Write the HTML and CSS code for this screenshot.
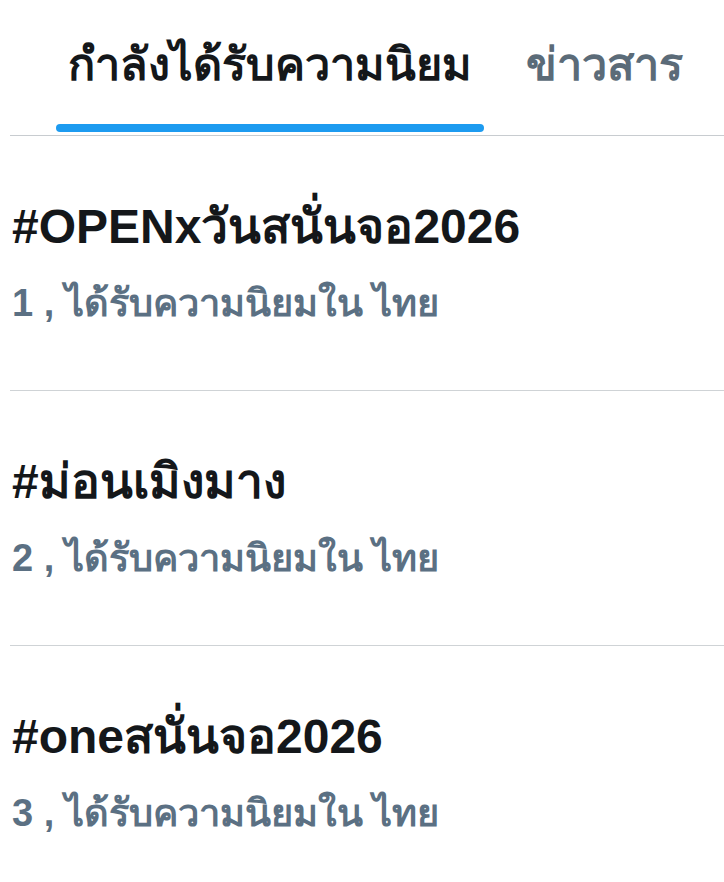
FILE: index.html
```html
<!DOCTYPE html>
<html lang="th">
<head>
<meta charset="utf-8">
<link rel="stylesheet" href="styles.css">
</head>
<body>
<div class="page">
  <nav class="tabs">
    <div class="tab active">
      <span class="tab-label">กำลังได้รับความนิยม</span>
      <span class="tab-bar"></span>
    </div>
    <div class="tab">
      <span class="tab-label">ข่าวสาร</span>
    </div>
  </nav>
  <ul class="trends">
    <li class="trend">
      <div class="trend-title">#OPENxวันสนั่นจอ2026</div>
      <div class="trend-meta">1 , ได้รับความนิยมใน ไทย</div>
    </li>
    <li class="trend">
      <div class="trend-title">#ม่อนเมิงมาง</div>
      <div class="trend-meta">2 , ได้รับความนิยมใน ไทย</div>
    </li>
    <li class="trend">
      <div class="trend-title">#oneสนั่นจอ2026</div>
      <div class="trend-meta">3 , ได้รับความนิยมใน ไทย</div>
    </li>
  </ul>
</div>
</body>
</html>
```
FILE: styles.css
```css
html, body {
  margin: 0;
  padding: 0;
  background: #ffffff;
}
body {
  font-family: "Liberation Sans", "Noto Sans", sans-serif;
  width: 724px;
  height: 882px;
  overflow: hidden;
}
.page {
  display: flex;
  flex-direction: column;
}
.tabs {
  display: flex;
  align-items: flex-start;
  gap: 30px;
  padding-left: 46px;
  height: 135px;
  border-bottom: 1px solid #c8ccd0;
  margin-left: 10px;
}
.tab {
  display: flex;
  flex-direction: column;
  align-items: stretch;
}
.tab-label {
  font-size: 45px;
  font-weight: 700;
  color: #5b6b78;
  padding: 34px 12px 0;
  height: 90px;
  line-height: 62px;
  white-space: nowrap;
}
.tab.active .tab-label {
  color: #14171a;
}
.tab-bar {
  height: 8px;
  background: #1d9bf0;
  border-radius: 4px;
}
.trends {
  list-style: none;
  margin: 0;
  padding: 0 0 0 10px;
}
.trend {
  height: 255px;
  border-bottom: 1px solid #cfd3d6;
  box-sizing: border-box;
  padding-top: 61px;
  padding-left: 2px;
}
.trend:last-child {
  border-bottom: none;
}
.trend-title {
  font-size: 48px;
  font-weight: 700;
  color: #14171a;
  line-height: 60px;
}
.trend-meta {
  font-size: 38px;
  font-weight: 700;
  color: #5b7083;
  line-height: 60px;
  margin-top: 16px;
}
```
